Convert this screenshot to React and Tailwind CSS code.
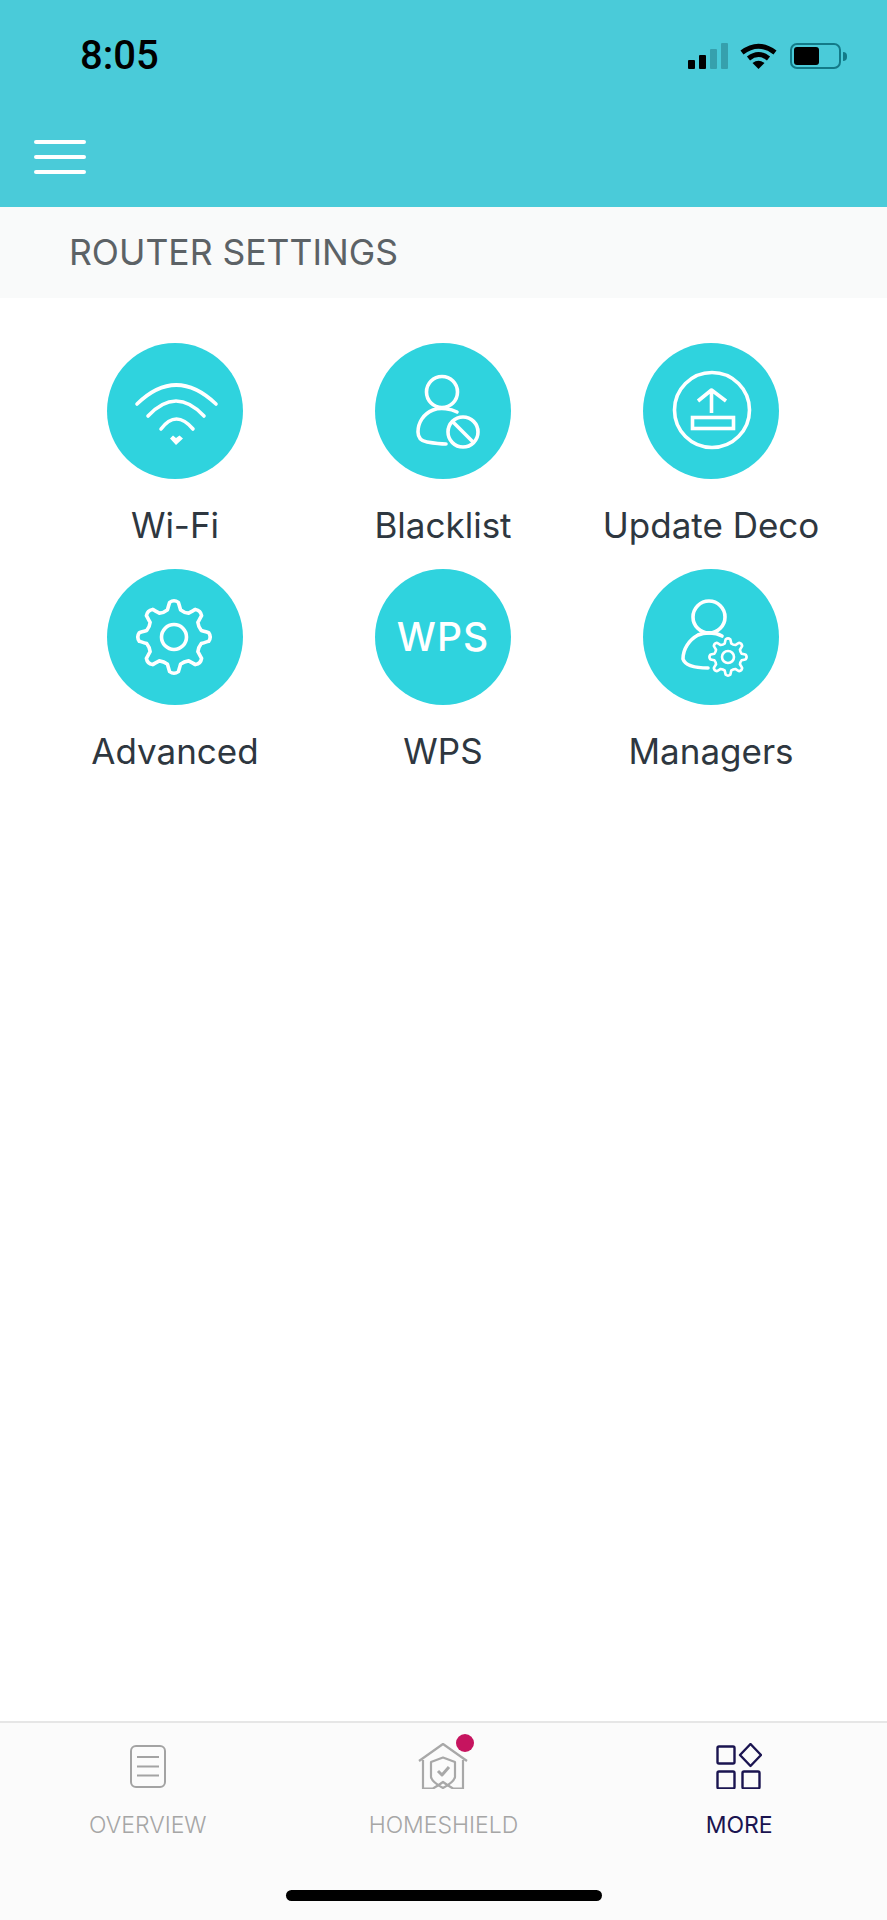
function gearPath(cx, cy, outer, inner, teeth) {
  const pt = (r, a) => `${(cx + r * Math.cos(a)).toFixed(2)} ${(cy + r * Math.sin(a)).toFixed(2)}`;
  const step = (Math.PI * 2) / teeth;
  let d = '';
  for (let i = 0; i < teeth; i++) {
    const a = -Math.PI / 2 + i * step;
    const s = step * 0.16;
    const rise = step * 0.3;
    d += i === 0 ? `M${pt(inner, a - rise)} ` : `Q${pt(inner * 0.94, a - step / 2)} ${pt(inner, a - rise)} `;
    d += `Q${pt(outer * 0.92, a - s * 1.2)} ${pt(outer * 0.97, a - s)} `;
    d += `Q${pt(outer * 1.05, a)} ${pt(outer * 0.97, a + s)} `;
    d += `Q${pt(outer * 0.92, a + s * 1.2)} ${pt(inner, a + rise)} `;
  }
  const last = -Math.PI / 2 - step / 2;
  d += `Q${pt(inner * 0.94, last)} ${pt(inner, -Math.PI / 2 - step * 0.3)} Z`;
  return d;
}

function CircleSvg({ children }) {
  return (
    <svg viewBox="0 0 136 136" className="w-[136px] h-[136px]" fill="none" stroke="white" strokeWidth="3.6" strokeLinecap="round" strokeLinejoin="round">
      {children}
    </svg>
  );
}

function WifiIcon() {
  return (
    <CircleSvg>
      <path d="M30 61 Q69 23 109 61" />
      <path d="M41 73 Q69 43 97 73" />
      <path d="M54 86 Q69 66 86 86" />
      <path d="M63 95.5 L69 102 L76 95.5 L72.5 92.5 L69 95 L66 92.5 Z" fill="white" stroke="none" />
    </CircleSvg>
  );
}

function BlacklistIcon() {
  return (
    <CircleSvg>
      <circle cx="67" cy="49" r="15.5" />
      <path d="M82 69 C76 66 66 64 58 67 C48 71 43 80 43 89 C43 95 46 98 52 99 C58 100 64 101 71 101" />
      <circle cx="88" cy="89" r="15" />
      <path d="M78 79 L98 99" />
    </CircleSvg>
  );
}

function UpdateIcon() {
  return (
    <CircleSvg>
      <circle cx="69" cy="67" r="37.5" />
      <path d="M68.500 70 V47 M55 58 L68.500 47 L83 58" strokeLinecap="butt" />
      <rect x="49.500" y="74.500" width="41" height="11" strokeLinejoin="miter" />
    </CircleSvg>
  );
}

function AdvancedIcon() {
  return (
    <CircleSvg>
      <path d={gearPath(67, 68, 36, 28, 8)} />
      <circle cx="67" cy="68" r="12.500" />
    </CircleSvg>
  );
}

function ManagersIcon() {
  return (
    <CircleSvg>
      <circle cx="66" cy="48" r="16" />
      <path d="M79 67 C72 63 62 63 55 66 C46 71 40 80 40 90 C42 96 52 99 65 99" />
      <path d={gearPath(85, 88, 18.500, 14, 8)} strokeWidth="2.600" />
      <circle cx="85" cy="88" r="6" strokeWidth="2.600" />
    </CircleSvg>
  );
}

function Tile({ label, children }) {
  return (
    <div className="flex flex-col items-center">
      <div className="w-[136px] h-[136px] rounded-full bg-[#2fd3de] flex items-center justify-center">
        {children}
      </div>
      <div className="mt-[24px] h-[44px] leading-[44px] text-[35px] text-[#2e3740] whitespace-nowrap">{label}</div>
    </div>
  );
}

function StatusIcons() {
  return (
    <div className="flex items-center">
      <div className="flex items-end gap-[4px] h-[26px]">
        <div className="w-[7px] h-[9px] rounded-[1px] bg-black" />
        <div className="w-[7px] h-[14px] rounded-[1px] bg-black" />
        <div className="w-[7px] h-[20px] rounded-[1px] bg-[#36a0ad]" />
        <div className="w-[7px] h-[26px] rounded-[1px] bg-[#36a0ad]" />
      </div>
      <svg viewBox="0 0 37 26" className="w-[37px] h-[26px] ml-[12px]" fill="none" stroke="black" strokeWidth="5">
        <path d="M2 9.500 Q18.500 -3 35 9.500" />
        <path d="M8.500 15.500 Q18.500 7.500 28.500 15.500" />
        <path d="M12.500 20 L18.500 26 L24.500 20 Q18.500 15.500 12.500 20 Z" fill="black" stroke="none" />
      </svg>
      <div className="ml-[13px] flex items-center">
        <div className="w-[51px] h-[26px] rounded-[7px] border-2 border-[#137a88] p-[2px]">
          <div className="w-[25px] h-full rounded-[3px] bg-black" />
        </div>
        <div className="ml-[2px] w-[4px] h-[9px] rounded-r-full bg-[#137a88]" />
      </div>
    </div>
  );
}

function DocIcon() {
  return (
    <svg viewBox="0 0 36 46" className="w-[36px] h-[46px]" fill="none" stroke="#a3a3a3" strokeWidth="2">
      <rect x="1" y="3" width="34" height="41" rx="5" />
      <path d="M7 14 H29 M7 23.500 H29 M7 32.500 H29" />
    </svg>
  );
}

function ShieldHomeIcon() {
  return (
    <div className="relative w-[50px] h-[46px]">
      <svg viewBox="0 0 50 46" className="w-[50px] h-[46px]" fill="none" stroke="#a8a8a8" strokeWidth="2.200" strokeLinejoin="round">
        <path d="M1 18 L25 1 L49 18" />
        <path d="M5 17 V45.500 H15 Q21 42 25 39 Q29 42 35 45.500 H45 V17" />
        <path d="M25 14.500 L37 19 V34 Q36 39 25 45 Q14 39 13 34 V19 Z" />
        <path d="M20 28 L24 32 L31 24" strokeWidth="3" />
      </svg>
      <div className="absolute top-[-9px] left-[38px] w-[18px] h-[18px] rounded-full bg-[#c6145f]" />
    </div>
  );
}

function MoreIcon() {
  return (
    <svg viewBox="0 0 46 46" className="w-[46px] h-[46px]" fill="none" stroke="#1a1450" strokeWidth="2.400" strokeLinejoin="round">
      <rect x="1.500" y="3.500" width="17" height="17" rx="1.500" />
      <rect x="1.500" y="28.500" width="17" height="17" rx="1.500" />
      <rect x="26.500" y="28.500" width="17" height="17" rx="1.500" />
      <path d="M34.500 1 L45 12 L34.500 23 L24 12 Z" />
    </svg>
  );
}

function NavItem({ label, active, children }) {
  return (
    <div className="flex flex-col items-center">
      <div className="h-[46px] flex items-center justify-center">{children}</div>
      <div className={`mt-[22px] h-[28px] leading-[28px] text-[23px] whitespace-nowrap ${active ? 'text-[#1a1450]' : 'text-[#a6a6a6] font-light'}`}>
        {label}
      </div>
    </div>
  );
}

export default function App() {
  return (
    <div className="w-[887px] h-[1920px] flex flex-col bg-white font-['Inter',sans-serif] overflow-hidden">
      <header className="h-[207px] bg-[#4acbd9] flex flex-col">
        <div className="mt-[40px] pl-[80px] pr-[40px] h-[32px] flex items-center justify-between">
          <span className="text-[40px] font-medium text-black font-['Roboto',sans-serif]">8:05</span>
          <StatusIcons />
        </div>
        <div className="mt-[68px] ml-[34px] w-[52px] flex flex-col gap-[11px]">
          <div className="h-[4px] rounded-full bg-white" />
          <div className="h-[4px] rounded-full bg-white" />
          <div className="h-[4px] rounded-full bg-white" />
        </div>
      </header>

      <div className="h-[91px] bg-[#f9fafa] pl-[69px] flex items-center text-[35.5px] text-[#5c6266]">
        ROUTER SETTINGS
      </div>

      <main className="flex-1 pl-[41px] pr-[42px] pt-[45px]">
        <div className="grid grid-cols-3 gap-y-[22px]">
          <Tile label="Wi-Fi"><WifiIcon /></Tile>
          <Tile label="Blacklist"><BlacklistIcon /></Tile>
          <Tile label="Update Deco"><UpdateIcon /></Tile>
          <Tile label="Advanced"><AdvancedIcon /></Tile>
          <Tile label="WPS"><span className="text-[39px] font-medium text-white tracking-[1px]">WPS</span></Tile>
          <Tile label="Managers"><ManagersIcon /></Tile>
        </div>
      </main>

      <nav className="h-[199px] border-t-2 border-[#e6e6e6] bg-[#fbfbfb] pt-[20px] flex flex-col">
        <div className="grid grid-cols-3">
          <NavItem label="OVERVIEW"><DocIcon /></NavItem>
          <NavItem label="HOMESHIELD"><ShieldHomeIcon /></NavItem>
          <NavItem label="MORE" active><MoreIcon /></NavItem>
        </div>
        <div className="mt-[51px] mx-auto w-[316px] h-[11px] rounded-full bg-black" />
      </nav>
    </div>
  );
}
